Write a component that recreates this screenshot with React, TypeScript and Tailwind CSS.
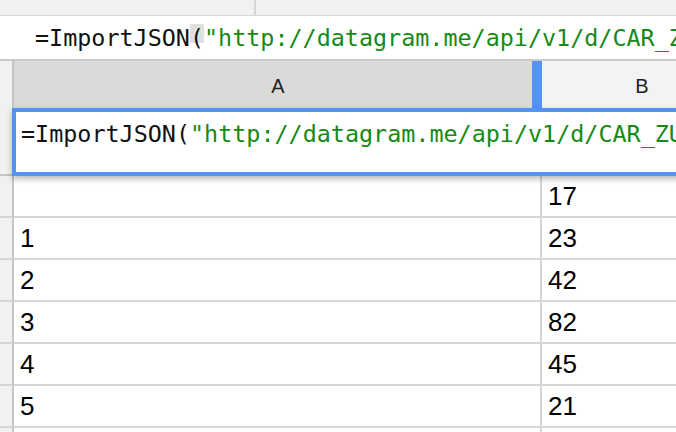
const mono = "font-['DejaVu_Sans_Mono','Liberation_Mono',monospace]";
const sans = "font-['Liberation_Sans',Arial,sans-serif]";

const rows: [string, string][] = [
  ["", "17"],
  ["1", "23"],
  ["2", "42"],
  ["3", "82"],
  ["4", "45"],
  ["5", "21"],
  ["", ""],
];

function Formula({ highlight }: { highlight?: boolean }) {
  return (
    <span className="whitespace-pre">
      <span className="text-[#111]">=ImportJSON</span>
      {highlight ? (
        <span className="relative">
          <span className="absolute left-0 right-0 top-0 h-[19px] bg-[#e0e0e0]" />
          <span className="relative text-[#111]">(</span>
        </span>
      ) : (
        <span className="text-[#111]">(</span>
      )}
      <span className="text-[#168a16]">"http://datagram.me/api/v1/d/CAR_ZUR_2015"</span>
    </span>
  );
}

export default function App() {
  return (
    <div className="w-[676px] h-[432px] overflow-hidden bg-white">
      {/* toolbar strip */}
      <div className="flex h-[16px] bg-[#f1f1f1] border-b border-[#d9d9d9]">
        <div className="w-[254px]" />
        <div className="w-[2px] bg-[#d6d6d6]" />
        <div className="flex-1" />
      </div>

      {/* formula bar */}
      <div className="flex items-center h-[45px] bg-white border-b-2 border-[#cacaca] overflow-hidden">
        <div className="ml-[12px] w-[2px] h-[25px] bg-[#cdd0d6]" />
        <div className={`ml-[23px] text-[23.4px] leading-[28px] ${mono}`}>
          <Formula highlight />
        </div>
      </div>

      <div className="relative">
        {/* column headers */}
        <div className={`flex h-[49px] ${sans} text-[20px] text-[#222]`}>
          <div className="w-[14px] shrink-0 bg-[#f1f1f1] border-r-2 border-[#c6c6c6]" />
          <div className="relative w-[528px] shrink-0 flex items-center justify-center bg-[#dadada]">
            A
            <div className="absolute right-0 top-0 bottom-0 w-[10px] bg-[#5592f5]" />
          </div>
          <div className="w-[200px] shrink-0 flex items-center justify-center bg-[#f3f3f3]">B</div>
        </div>

        {/* row 1, under the editor */}
        <div className="flex h-[66px]">
          <div className="w-[14px] shrink-0 bg-[#f1f1f1] border-r-2 border-b-2 border-[#c6c6c6]" />
          <div className="w-[528px] shrink-0 border-r-2 border-b-2 border-[#d6d6d6]" />
          <div className="w-[200px] shrink-0 border-b-2 border-[#d6d6d6]" />
        </div>

        {rows.map(([a, b], i) => (
          <div key={i} className={`flex h-[42px] ${sans} text-[26px] text-black`}>
            <div className="w-[14px] shrink-0 bg-[#f1f1f1] border-r-2 border-b-2 border-r-[#c6c6c6] border-b-[#d6d6d6]" />
            <div className="w-[528px] shrink-0 flex items-center pl-[6px] border-r-2 border-b-2 border-[#d6d6d6]">
              {a}
            </div>
            <div className="w-[200px] shrink-0 flex items-center pl-[6px] border-b-2 border-[#d6d6d6]">
              {b}
            </div>
          </div>
        ))}

        {/* cell editor */}
        <div className="absolute left-[12px] top-[47px] w-[700px] h-[68px] bg-white border-4 border-[#5592f5] shadow-[0_3px_6px_rgba(0,0,0,0.28)] overflow-hidden">
          <div className={`pl-[5px] pt-[8px] text-[23.4px] leading-[28px] ${mono}`}>
            <Formula />
          </div>
        </div>
      </div>
    </div>
  );
}
